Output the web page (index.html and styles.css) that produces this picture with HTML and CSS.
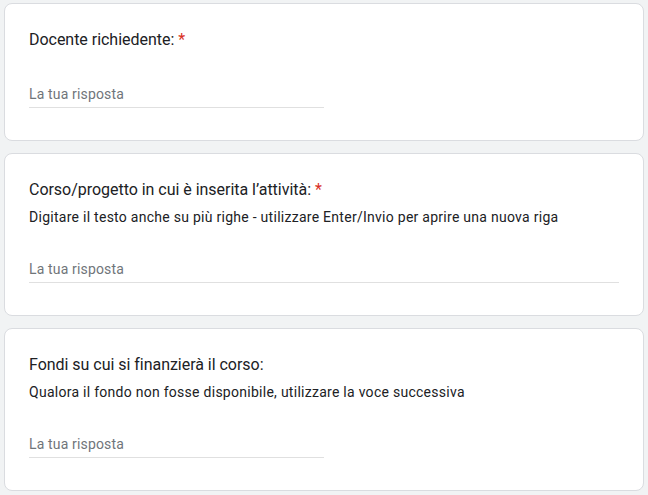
FILE: index.html
```html
<!DOCTYPE html>
<html lang="it">

<head>
  <meta charset="UTF-8">
  <meta name="viewport" content="width=device-width, initial-scale=1.0">
  <title>Modulo richiesta</title>
  <link rel="stylesheet" href="styles.css">
</head>

<body>
  <div class="form">
    <div class="question">
      <div class="title">Docente richiedente: <span class="required">*</span></div>
      <div class="answer">La tua risposta</div>
    </div>

    <div class="question">
      <div class="title">Corso/progetto in cui è inserita l’attività: <span class="required">*</span></div>
      <div class="description">Digitare il testo anche su più righe - utilizzare Enter/Invio per aprire una nuova riga</div>
      <div class="answer answer-wide">La tua risposta</div>
    </div>

    <div class="question">
      <div class="title">Fondi su cui si finanzierà il corso:</div>
      <div class="description">Qualora il fondo non fosse disponibile, utilizzare la voce successiva</div>
      <div class="answer">La tua risposta</div>
    </div>
  </div>
</body>

</html>
```

FILE: styles.css
```css
html,
body {
  margin: 0;
  padding: 0;
  background: #f1f3f4;
  font-family: Roboto, "Liberation Sans", Arial, sans-serif;
  color: #202124;
}

.form {
  padding: 3px 4px;
}

.question {
  background: #fff;
  border: 1px solid #dadce0;
  border-radius: 8px;
  padding: 24px 24px 32px;
  margin-bottom: 12px;
}

.title {
  font-size: 16px;
  line-height: 24px;
  letter-spacing: -0.03px;
}

.required {
  color: #d93025;
}

.description {
  margin-top: 5px;
  font-size: 14px;
  line-height: 20px;
  letter-spacing: 0.27px;
}

.answer {
  width: 50%;
  margin-top: 32px;
  padding-bottom: 3px;
  border-bottom: 1px solid #e0e0e0;
  font-size: 14px;
  line-height: 20px;
  letter-spacing: 0.15px;
  color: #70757a;
}

.answer-wide {
  width: 100%;
}
```
